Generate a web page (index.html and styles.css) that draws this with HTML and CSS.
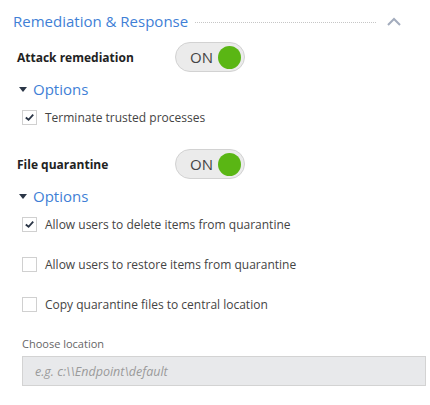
FILE: index.html
```html
<!DOCTYPE html>
<html>
<head>
<meta charset="utf-8">
<link rel="stylesheet" href="styles.css">
</head>
<body>
<div class="panel">
  <div class="header">
    <span class="title">Remediation &amp; Response</span>
    <span class="dots"></span>
    <svg class="chevron" width="14" height="9" viewBox="0 0 14 9"><polyline points="1,8 7,2 13,8" fill="none" stroke="#a3acbd" stroke-width="2"/></svg>
  </div>

  <div class="switch-row first">
    <span class="switch-label">Attack remediation</span>
    <div class="toggle"><span class="toggle-text">ON</span><span class="knob"></span></div>
  </div>
  <div class="options"><span class="caret"></span><span>Options</span></div>
  <label class="check-row">
    <span class="box"><svg width="14" height="14" viewBox="0 0 14 14"><polyline points="3,7.5 6,10 11,4.5" fill="none" stroke="#2b3647" stroke-width="2"/></svg></span>
    <span class="check-label">Terminate trusted processes</span>
  </label>

  <div class="switch-row second">
    <span class="switch-label">File quarantine</span>
    <div class="toggle"><span class="toggle-text">ON</span><span class="knob"></span></div>
  </div>
  <div class="options"><span class="caret"></span><span>Options</span></div>
  <label class="check-row">
    <span class="box"><svg width="14" height="14" viewBox="0 0 14 14"><polyline points="3,7.5 6,10 11,4.5" fill="none" stroke="#2b3647" stroke-width="2"/></svg></span>
    <span class="check-label">Allow users to delete items from quarantine</span>
  </label>
  <label class="check-row spaced">
    <span class="box"></span>
    <span class="check-label">Allow users to restore items from quarantine</span>
  </label>
  <label class="check-row spaced">
    <span class="box"></span>
    <span class="check-label">Copy quarantine files to central location</span>
  </label>

  <div class="field">
    <div class="field-label">Choose location</div>
    <div class="input">e.g. c:\\Endpoint\default</div>
  </div>
</div>
</body>
</html>
```

FILE: styles.css
```css
html, body {
  margin: 0;
  padding: 0;
  background: #ffffff;
}
body {
  font-family: "Open Sans", "Noto Sans", sans-serif;
  color: #333;
}
.panel {
  width: 430px;
  padding-top: 10px;
}
.header {
  display: flex;
  align-items: center;
  height: 22px;
  padding-left: 13px;
  padding-right: 29px;
}
.title {
  font-size: 15px;
  color: #3f7fd6;
  white-space: nowrap;
}
.dots {
  flex: 1;
  height: 0;
  border-top: 1px dotted #c6c6c6;
  margin: 3px 11px 0 7px;
}
.chevron {
  display: block;
}
.switch-row {
  display: flex;
  align-items: center;
  height: 30px;
  padding-left: 17px;
}
.switch-row.first {
  margin-top: 10px;
}
.switch-row.second {
  margin-top: 22px;
}
.switch-label {
  width: 158px;
  font-size: 12px;
  font-weight: 700;
  color: #222;
}
.toggle {
  box-sizing: border-box;
  width: 70px;
  height: 30px;
  border: 1px solid #d2d2d2;
  border-radius: 15px;
  background: #ebebeb;
  display: flex;
  align-items: center;
  justify-content: space-between;
  padding: 0 3px 0 14px;
}
.toggle-text {
  font-size: 15px;
  color: #444;
}
.knob {
  width: 23px;
  height: 23px;
  border-radius: 50%;
  background: #5ab614;
}
.options {
  display: flex;
  align-items: center;
  height: 22px;
  margin-top: 6px;
  padding-left: 19px;
  font-size: 15px;
  color: #3f7fd6;
}
.caret {
  width: 0;
  height: 0;
  border-left: 4.5px solid transparent;
  border-right: 4.5px solid transparent;
  border-top: 5px solid #2b3647;
  margin-right: 6px;
}
.check-row {
  display: flex;
  align-items: center;
  height: 20px;
  margin-top: 7px;
  padding-left: 22px;
}
.check-row.spaced {
  margin-top: 20px;
}
.box {
  box-sizing: border-box;
  width: 15px;
  height: 15px;
  border: 1px solid #d0d0d0;
  background: #fff;
  display: flex;
  align-items: center;
  justify-content: center;
}
.box svg {
  display: block;
}
.check-label {
  margin-left: 8px;
  font-size: 12px;
  color: #444;
}
.field {
  margin-top: 22px;
  padding-left: 22px;
  padding-right: 4px;
}
.field-label {
  font-size: 11px;
  line-height: 16px;
  color: #666;
}
.input {
  box-sizing: border-box;
  margin-top: 4px;
  height: 30px;
  border: 1px solid #d3d3d3;
  background: #e8e9eb;
  padding-left: 12px;
  display: flex;
  align-items: center;
  font-size: 12.5px;
  font-style: italic;
  color: #9a9a9a;
}
```
